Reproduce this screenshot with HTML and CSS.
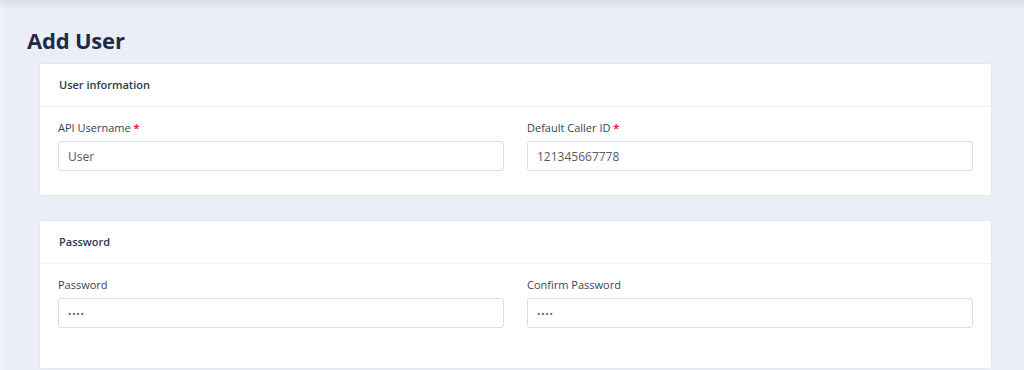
FILE: index.html
```html
<!DOCTYPE html>
<html>
<head>
  <meta charset="utf-8">
  <title>Add User</title>
  <link rel="stylesheet" href="styles.css">
</head>
<body>
  <div class="page">
    <h1 class="title">Add User</h1>
    <div class="card">
      <div class="card-header">User information</div>
      <div class="card-body">
        <div class="field">
          <label>API Username <span class="req">*</span></label>
          <input type="text" value="User">
        </div>
        <div class="field">
          <label>Default Caller ID <span class="req">*</span></label>
          <input type="text" value="121345667778">
        </div>
      </div>
    </div>
    <div class="card">
      <div class="card-header">Password</div>
      <div class="card-body tall">
        <div class="field">
          <label>Password</label>
          <input type="password" value="1234">
        </div>
        <div class="field">
          <label>Confirm Password</label>
          <input type="password" value="1234">
        </div>
      </div>
    </div>
  </div>
</body>
</html>
```

FILE: styles.css
```css
html, body {
  margin: 0;
  padding: 0;
}
body {
  font-family: "Open Sans", "Noto Sans", Arial, sans-serif;
  background: #ebeef6;
  height: 370px;
  overflow: hidden;
  box-shadow: inset 0 8px 10px -6px rgba(30, 40, 70, 0.12), inset 8px 0 8px -8px rgba(255,255,255,0.8);
}
.page {
  padding: 24px 32px 0 27px;
}
.title {
  margin: 0 0 7px 0;
  font-size: 22px;
  font-weight: 700;
  color: #1e2a4a;
  line-height: 32px;
  letter-spacing: -0.2px;
}
.card {
  margin: 0 0 24px 12px;
  background: #fff;
  border: 1px solid #e3e7ef;
  border-radius: 3px;
}
.card:last-child {
  margin-bottom: 0;
}
.card-header {
  height: 42px;
  line-height: 42px;
  padding: 0 19px;
  font-size: 11px;
  font-weight: 600;
  color: #2e3750;
  border-bottom: 1px solid #eef0f5;
}
.card-body {
  display: grid;
  grid-template-columns: 1fr 1fr;
  column-gap: 23px;
  padding: 13px 18px 24px 18px;
}
.card-body.tall {
  padding-bottom: 40px;
}
.field label {
  display: block;
  font-size: 11px;
  color: #3a4257;
  line-height: 16px;
  margin-bottom: 5px;
}
.req {
  color: #ee1c1c;
  font-weight: 700;
}
input {
  box-sizing: border-box;
  width: 100%;
  height: 30px;
  padding: 0 9px;
  border: 1px solid #d8dde6;
  border-radius: 3px;
  font-family: "Open Sans", "Noto Sans", Arial, sans-serif;
  font-size: 12px;
  color: #555b66;
  background: #fff;
  outline: none;
}
input[type=password] {
  font-size: 9px;
  letter-spacing: 0.8px;
}
```
